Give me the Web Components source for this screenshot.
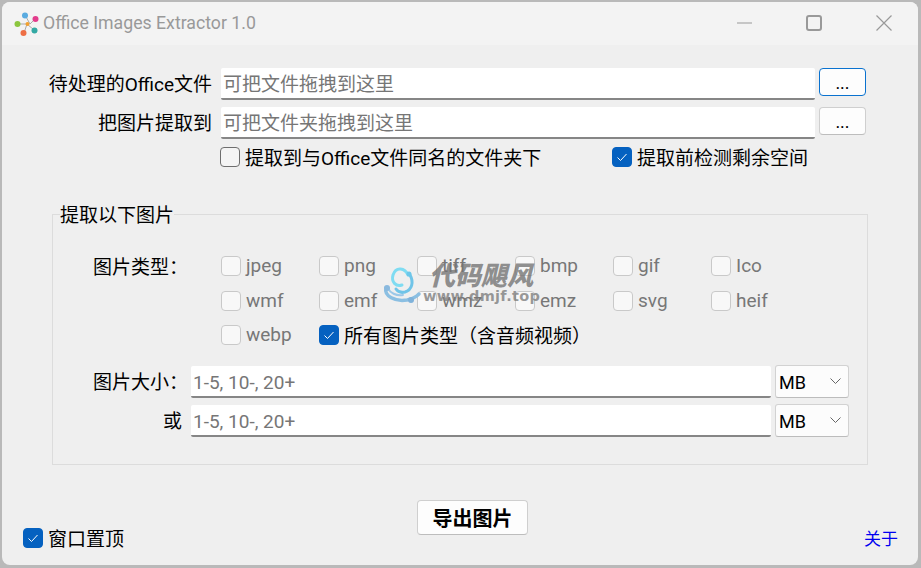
<!DOCTYPE html>
<html lang="zh">
<head>
<meta charset="utf-8">
<title>Office Images Extractor 1.0</title>
<style>
  html, body { margin: 0; height: 100%; }
  body {
    background: #b9b9b9;
    font: 19px/26px Roboto, "Noto Sans CJK SC", sans-serif;
    color: #000;
    overflow: hidden;
    text-spacing-trim: space-all;
  }
</style>
</head>
<body>
<app-window>
  <title-bar slot="title">Office Images Extractor 1.0</title-bar>

  <path-row placeholder="可把文件拖拽到这里" focused>待处理的Office文件</path-row>
  <path-row placeholder="可把文件夹拖拽到这里">把图片提取到</path-row>
  <option-row>
    <ui-check>提取到与Office文件同名的文件夹下</ui-check>
    <ui-check slot="right" checked>提取前检测剩余空间</ui-check>
  </option-row>

  <group-box heading="提取以下图片">
    <type-grid label="图片类型：">
      <ui-check disabled>jpeg</ui-check>
      <ui-check disabled>png</ui-check>
      <ui-check disabled>tiff</ui-check>
      <ui-check disabled>bmp</ui-check>
      <ui-check disabled>gif</ui-check>
      <ui-check disabled>Ico</ui-check>
      <ui-check disabled>wmf</ui-check>
      <ui-check disabled>emf</ui-check>
      <ui-check disabled>wmz</ui-check>
      <ui-check disabled>emz</ui-check>
      <ui-check disabled>svg</ui-check>
      <ui-check disabled>heif</ui-check>
      <ui-check disabled>webp</ui-check>
      <ui-check checked class="wide">所有图片类型（含音频视频）</ui-check>
    </type-grid>
    <size-row>图片大小：</size-row>
    <size-row end>或</size-row>
  </group-box>

  <bottom-bar>
    <ui-check slot="left" checked>窗口置顶</ui-check>
    <ui-button slot="middle">导出图片</ui-button>
    <span slot="right">关于</span>
  </bottom-bar>

  <dmjf-mark slot="overlay"></dmjf-mark>
</app-window>

<script>
/* 창 전체 틀 */
class AppWindow extends HTMLElement {
  constructor() {
    super();
    this.attachShadow({ mode: "open" });
    this.shadowRoot.innerHTML = `
      <style>
        :host {
          display: flex;
          flex-direction: column;
          position: relative;
          box-sizing: border-box;
          margin: 2px 3px 3px 2px;
          height: 563px;
          background: #efefef;
          border-radius: 8px;
          overflow: hidden;
        }
        .content {
          flex: 1;
          display: flex;
          flex-direction: column;
          padding-top: 23px;
        }
      </style>
      <slot name="title"></slot>
      <div class="content"><slot></slot></div>
      <slot name="overlay"></slot>
    `;
  }
}
customElements.define("app-window", AppWindow);

class TitleBar extends HTMLElement {
  constructor() {
    super();
    this.attachShadow({ mode: "open" });
    this.shadowRoot.innerHTML = `
      <style>
        :host {
          display: flex;
          align-items: center;
          height: 43px;
          flex: none;
          background: #f3f3f3;
          color: #999;
          font-size: 17.700px;
          padding-left: 11px;
        }
        .logo { width: 26px; height: 28px; margin-right: 4px; flex: none; }
        .text { flex: 1; margin-top: -1px; }
        .controls { display: flex; align-items: center; flex: none; padding-right: 26px; gap: 54px; margin-top: -1px; }
        .controls svg { display: block; }
      </style>
      <svg class="logo" viewBox="11 8 26 28">
        <g stroke="#a9a9a9" stroke-width="1" fill="none">
          <path d="M23 13L28 22L33 17M16 22H25L32 28M25 22L22 31"/>
        </g>
        <circle cx="23" cy="13.500" r="3" fill="#5aabe0"/>
        <circle cx="33.500" cy="17" r="3" fill="#e23c8c"/>
        <circle cx="32.500" cy="28.500" r="3" fill="#33a9a4"/>
        <circle cx="21.500" cy="31" r="3" fill="#ee6f45"/>
        <circle cx="15.500" cy="22" r="3" fill="#8cc63f"/>
        <circle cx="25.500" cy="22" r="2" fill="#f3a12e"/>
      </svg>
      <span class="text"><slot></slot></span>
      <div class="controls">
        <svg width="15" height="16" viewBox="0 0 15 16"><path d="M0 8H15" stroke="#999" stroke-width="1"/></svg>
        <svg width="16" height="16" viewBox="0 0 16 16"><rect x="1" y="1" width="14" height="14" rx="2" fill="none" stroke="#999" stroke-width="2"/></svg>
        <svg width="16" height="16" viewBox="0 0 16 16"><path d="M.5 .5L15.500 15.500M15.500 .5L.5 15.500" stroke="#999" stroke-width="1.200" fill="none"/></svg>
      </div>
    `;
  }
}
customElements.define("title-bar", TitleBar);

class UiInput extends HTMLElement {
  static get observedAttributes() { return ["placeholder"]; }
  constructor() {
    super();
    this.attachShadow({ mode: "open" });
    this.shadowRoot.innerHTML = `
      <style>
        :host {
          display: flex;
          align-items: center;
          box-sizing: border-box;
          height: 32px;
          min-width: 0;
          background: #fff;
          border-bottom: 2px solid #868686;
          border-radius: 2px;
          padding: 3px 2px 0;
          color: #767676;
          white-space: nowrap;
          overflow: hidden;
        }
      </style>
      <span id="ph"></span>
    `;
  }
  attributeChangedCallback(name, oldValue, value) {
    this.shadowRoot.getElementById("ph").textContent = value;
  }
}
customElements.define("ui-input", UiInput);

class UiButton extends HTMLElement {
  constructor() {
    super();
    this.attachShadow({ mode: "open" });
    this.shadowRoot.innerHTML = `
      <style>
        :host {
          display: flex;
          align-items: center;
          justify-content: center;
          box-sizing: border-box;
          background: #fdfdfd;
          border: 1px solid #cfcfcf;
          border-bottom-color: #bdbdbd;
          border-radius: 4px;
          font-weight: 700;
          font-size: 20px;
          padding-top: 2px;
          width: 111px;
          height: 35px;
        }
        :host([small]) {
          width: 47px;
          height: 28px;
          font-weight: 400;
          font-size: 18px;
          padding-top: 2px;
        }
        :host([focused]) { border: 1px solid #0a72cf; }
      </style>
      <slot></slot>
    `;
  }
}
customElements.define("ui-button", UiButton);

class PathRow extends HTMLElement {
  constructor() {
    super();
    this.attachShadow({ mode: "open" });
    this.shadowRoot.innerHTML = `
      <style>
        :host {
          display: grid;
          grid-template-columns: 219px 594px 51px;
          align-items: start;
          height: 39px;
        }
        .label { justify-self: end; line-height: 32px; margin: 1px 9px 0 0; white-space: nowrap; }
        ui-button { margin-left: 4px; }
      </style>
      <span class="label"><slot></slot></span>
      <ui-input></ui-input>
      <ui-button small>...</ui-button>
    `;
    this.shadowRoot.querySelector("ui-input").setAttribute("placeholder", this.getAttribute("placeholder"));
    if (this.hasAttribute("focused")) {
      this.shadowRoot.querySelector("ui-button").setAttribute("focused", "");
    }
  }
}
customElements.define("path-row", PathRow);

class UiCheck extends HTMLElement {
  constructor() {
    super();
    this.attachShadow({ mode: "open" });
    this.shadowRoot.innerHTML = `
      <style>
        :host {
          display: inline-flex;
          align-items: center;
          gap: 5px;
          height: 20px;
          white-space: nowrap;
        }
        .box {
          box-sizing: border-box;
          width: 20px;
          height: 20px;
          flex: none;
          border: 1px solid #6e6e6e;
          border-radius: 4px;
          background: #f4f4f4;
        }
        .box svg { display: none; }
        :host([disabled]) { color: #777; }
        :host([disabled]) .box { border-color: #c9c9c9; background: #f8f8f8; }
        :host([checked]) .box { background: #0561c0; border-color: #0561c0; }
        :host([checked]) .box svg { display: block; }
        .label { margin-top: 3px; }
        :host([disabled]) .label { margin-top: 0; }
      </style>
      <span class="box">
        <svg width="18" height="18" viewBox="0 0 18 18"><path d="M4.500 9.500L7.500 12.500L13.500 6" fill="none" stroke="#fff" stroke-width="1"/></svg>
      </span>
      <span class="label"><slot></slot></span>
    `;
  }
}
customElements.define("ui-check", UiCheck);

class OptionRow extends HTMLElement {
  constructor() {
    super();
    this.attachShadow({ mode: "open" });
    this.shadowRoot.innerHTML = `
      <style>
        :host {
          display: grid;
          grid-template-columns: 392px auto;
          padding-left: 218px;
          margin-top: 1px;
        }
      </style>
      <slot></slot>
      <slot name="right"></slot>
    `;
  }
}
customElements.define("option-row", OptionRow);

class GroupBox extends HTMLElement {
  constructor() {
    super();
    this.attachShadow({ mode: "open" });
    this.shadowRoot.innerHTML = `
      <style>
        :host {
          display: block;
          margin: 32px 0 0 50px;
          width: 816px;
        }
        fieldset {
          box-sizing: border-box;
          height: 266px;
          margin: 0;
          padding: 27px 18px 0 0;
          border: 1px solid #dcdcdc;
          min-width: 0;
        }
        legend {
          padding: 4px 0 0;
          margin-left: 7px;
          line-height: 26px;
        }
      </style>
      <fieldset>
        <legend></legend>
        <slot></slot>
      </fieldset>
    `;
    this.shadowRoot.querySelector("legend").textContent = this.getAttribute("heading");
  }
}
customElements.define("group-box", GroupBox);

class TypeGrid extends HTMLElement {
  constructor() {
    super();
    this.attachShadow({ mode: "open" });
    this.shadowRoot.innerHTML = `
      <style>
        :host {
          display: grid;
          grid-template-columns: 168px 1fr;
          height: 109px;
        }
        .label { padding-left: 40px; line-height: 20px; margin-top: 2px; white-space: nowrap; }
        .items {
          display: grid;
          grid-template-columns: repeat(6, 98px);
          grid-template-rows: 20px 20px 20px;
          row-gap: 14.500px;
        }
        ::slotted(.wide) { grid-column: span 5; }
      </style>
      <span class="label"></span>
      <div class="items"><slot></slot></div>
    `;
    this.shadowRoot.querySelector(".label").textContent = this.getAttribute("label");
  }
}
customElements.define("type-grid", TypeGrid);

class UiCombo extends HTMLElement {
  constructor() {
    super();
    this.attachShadow({ mode: "open" });
    this.shadowRoot.innerHTML = `
      <style>
        :host {
          display: flex;
          align-items: center;
          justify-content: space-between;
          box-sizing: border-box;
          height: 33px;
          background: #fcfcfc;
          border: 1px solid #d2d2d2;
          border-bottom-color: #bcbcbc;
          border-radius: 3px;
          padding: 2px 7px 0 3px;
          font-size: 18px;
        }
        svg { margin-top: -2px; }
      </style>
      <slot></slot>
      <svg width="11" height="7" viewBox="0 0 11 7"><path d="M.5 .5L5.500 5.500L10.500 .5" fill="none" stroke="#666" stroke-width="1"/></svg>
    `;
  }
}
customElements.define("ui-combo", UiCombo);

class SizeRow extends HTMLElement {
  constructor() {
    super();
    this.attachShadow({ mode: "open" });
    this.shadowRoot.innerHTML = `
      <style>
        :host {
          display: grid;
          grid-template-columns: 138px 580px 78px;
          align-items: start;
          height: 39px;
        }
        .label { padding-left: 40px; line-height: 32px; white-space: nowrap; margin-top: 2px; }
        :host([end]) .label { justify-self: end; padding: 0 9px 0 0; }
        ui-input { margin-top: 1px; }
        ui-combo { margin-left: 4px; }
      </style>
      <span class="label"><slot></slot></span>
      <ui-input placeholder="1-5, 10-, 20+"></ui-input>
      <ui-combo>MB</ui-combo>
    `;
  }
}
customElements.define("size-row", SizeRow);

class BottomBar extends HTMLElement {
  constructor() {
    super();
    this.attachShadow({ mode: "open" });
    this.shadowRoot.innerHTML = `
      <style>
        :host {
          display: grid;
          grid-template-columns: 394px 111px 1fr;
          padding: 35px 20px 17px 21px;
        }
        .left { align-self: end; display: flex; }
        .middle { padding-bottom: 13px; }
        .right {
          align-self: end;
          justify-self: end;
          color: #0000f0;
          font-size: 17px;
          line-height: 20px;
          margin-bottom: -1px;
        }
      </style>
      <div class="left"><slot name="left"></slot></div>
      <div class="middle"><slot name="middle"></slot></div>
      <div class="right"><slot name="right"></slot></div>
    `;
  }
}
customElements.define("bottom-bar", BottomBar);

/* 스크린샷 위에 얹힌 워터마크 */
class DmjfMark extends HTMLElement {
  constructor() {
    super();
    this.attachShadow({ mode: "open" });
    this.shadowRoot.innerHTML = `
      <style>
        :host {
          position: absolute;
          left: 379px;
          top: 261px;
          width: 164px;
          height: 46px;
          pointer-events: none;
          display: block;
        }
        svg { position: absolute; left: 0; top: 1px; }
        .cn {
          position: absolute;
          left: 48px;
          top: 0;
          font-size: 26px;
          line-height: 26px;
          font-weight: 900;
          font-style: italic;
          color: rgba(115, 115, 115, .8);
          white-space: nowrap;
        }
        .url {
          position: absolute;
          left: 42px;
          top: 24px;
          font: 700 14.500px/18px "DejaVu Sans", sans-serif;
          color: rgba(120, 120, 120, .75);
          white-space: nowrap;
          letter-spacing: .3px;
        }
      </style>
      <svg width="42" height="42" viewBox="0 0 42 42" fill="none">
        <path d="M27 11C24 4 15 2 12 11C10 18 15 23 21 21" stroke="#7fdcf2" stroke-width="3" stroke-linecap="round"/>
        <path d="M29 11C33 18 31 26 24 28C20 29 17 28 15 25" stroke="#70c4e8" stroke-width="3" stroke-linecap="round"/>
        <path d="M5 24C3 32 14 38 26 36C31 35 35 33 38 30" stroke="#8bbfe2" stroke-width="3.500" stroke-linecap="round"/>
        <path d="M7 24C9 29 15 32 22 31" stroke="#9cc8e8" stroke-width="2" stroke-linecap="round"/>
        <circle cx="28" cy="10" r="2.500" fill="#6cc7ea"/>
        <circle cx="6" cy="24" r="3" fill="#8ab9de"/>
        <circle cx="30" cy="36" r="3" fill="#7fb2da"/>
      </svg>
      <span class="cn">代码飓风</span>
      <span class="url">www.dmjf.top</span>
    `;
  }
}
customElements.define("dmjf-mark", DmjfMark);
</script>
</body>
</html>
